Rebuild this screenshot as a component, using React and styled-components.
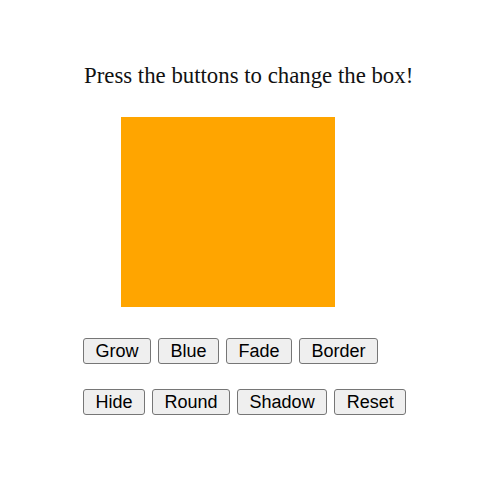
import React, { useState } from 'react';
import styled, { createGlobalStyle } from 'styled-components';

const GlobalStyle = createGlobalStyle`
  body {
    margin: 0;
    background: #ffffff;
    font-family: "Liberation Serif", "Times New Roman", serif;
  }
`;

const Page = styled.div`
  display: flex;
  flex-direction: column;
  align-items: flex-start;
  padding: 63px 0 0 83px;
`;

const Heading = styled.p`
  margin: 0 0 0 1px;
  font-size: 22.8px;
  line-height: 26px;
  color: #111;
`;

const Box = styled.div`
  width: 214px;
  height: 190px;
  margin: 28px 0 0 38px;
  background: ${p => p.$color};
  opacity: ${p => (p.$hidden ? 0 : p.$faded ? 0.5 : 1)};
  border: ${p => (p.$bordered ? '4px solid #333' : 'none')};
  border-radius: ${p => (p.$round ? '50%' : '0')};
  box-shadow: ${p => (p.$shadow ? '6px 6px 12px rgba(0,0,0,0.4)' : 'none')};
  box-sizing: border-box;
  transform: scale(${p => (p.$grown ? 1.2 : 1)});
`;

const ButtonRow = styled.div`
  display: flex;
  gap: 7px;
  margin-top: ${p => p.$top}px;
`;

const Button = styled.button`
  height: 26px;
  padding: 0 11.5px;
  border: 1px solid #767676;
  border-radius: 3px;
  background: #efefef;
  color: #000;
  font-family: "Liberation Sans", Arial, sans-serif;
  font-size: 18px;
  line-height: 24px;
  cursor: pointer;
`;

const initial = {
  color: 'orange',
  grown: false,
  faded: false,
  bordered: false,
  hidden: false,
  round: false,
  shadow: false,
};

export default function App() {
  const [box, setBox] = useState(initial);
  const set = patch => setBox(b => ({ ...b, ...patch }));

  return (
    <>
      <GlobalStyle />
      <Page>
        <Heading>Press the buttons to change the box!</Heading>
        <Box
          $color={box.color}
          $grown={box.grown}
          $faded={box.faded}
          $bordered={box.bordered}
          $hidden={box.hidden}
          $round={box.round}
          $shadow={box.shadow}
        />
        <ButtonRow $top={31}>
          <Button onClick={() => set({ grown: true })}>Grow</Button>
          <Button onClick={() => set({ color: 'blue' })}>Blue</Button>
          <Button onClick={() => set({ faded: true })}>Fade</Button>
          <Button onClick={() => set({ bordered: true })}>Border</Button>
        </ButtonRow>
        <ButtonRow $top={25}>
          <Button onClick={() => set({ hidden: true })}>Hide</Button>
          <Button onClick={() => set({ round: true })}>Round</Button>
          <Button onClick={() => set({ shadow: true })}>Shadow</Button>
          <Button onClick={() => setBox(initial)}>Reset</Button>
        </ButtonRow>
      </Page>
    </>
  );
}
